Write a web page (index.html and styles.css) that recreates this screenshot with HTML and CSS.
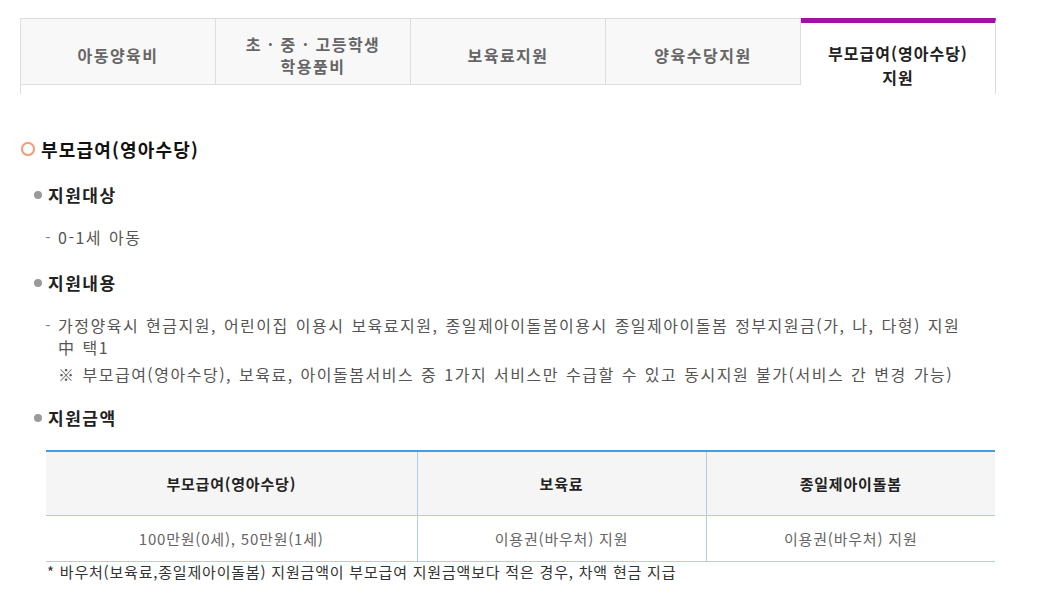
FILE: index.html
```html
<!DOCTYPE html>
<html lang="ko">
<head>
  <meta charset="UTF-8">
  <title>부모급여(영아수당) 지원</title>
  <link rel="stylesheet" href="styles.css">
</head>
<body>

  <div class="wrap">
    <ul class="tabs">
      <li class="tab">아동양육비</li>
      <li class="tab">초 · 중 · 고등학생<br>학용품비</li>
      <li class="tab">보육료지원</li>
      <li class="tab">양육수당지원</li>
      <li class="tab active">부모급여(영아수당)<br>지원</li>
    </ul>

    <div class="content">
      <h2 class="title">부모급여(영아수당)</h2>

      <h3 class="sub">지원대상</h3>
      <ul class="dash-list">
        <li>0-1세 아동</li>
      </ul>

      <h3 class="sub">지원내용</h3>
      <ul class="dash-list">
        <li>
          가정양육시 현금지원, 어린이집 이용시 보육료지원, 종일제아이돌봄이용시 종일제아이돌봄 정부지원금(가, 나, 다형) 지원<br>中 택1
          <p class="note">※ 부모급여(영아수당), 보육료, 아이돌봄서비스 중 1가지 서비스만 수급할 수 있고 동시지원 불가(서비스 간 변경 가능)</p>
        </li>
      </ul>

      <h3 class="sub">지원금액</h3>
      <table class="amount">
        <thead>
          <tr>
            <th class="col1">부모급여(영아수당)</th>
            <th class="col2">보육료</th>
            <th>종일제아이돌봄</th>
          </tr>
        </thead>
        <tbody>
          <tr>
            <td>100만원(0세), 50만원(1세)</td>
            <td>이용권(바우처) 지원</td>
            <td>이용권(바우처) 지원</td>
          </tr>
        </tbody>
      </table>
      <p class="foot">* 바우처(보육료,종일제아이돌봄) 지원금액이 부모급여 지원금액보다 적은 경우, 차액 현금 지급</p>
    </div>
  </div>

</body>
</html>
```

FILE: styles.css
```css
* {
  margin: 0;
  padding: 0;
  box-sizing: border-box;
}

body {
  font-family: "Noto Sans CJK KR", "Noto Sans", sans-serif;
  color: #333;
  background: #fff;
}

.wrap {
  padding: 18px 0 0 20px;
  width: 1000px;
}

/* tabs */
.tabs {
  list-style: none;
  display: flex;
  align-items: flex-start;
  width: 976px;
  border-left: 1px solid #ddd;
}

.tab {
  width: 195px;
  height: 67px;
  padding-top: 6px;
  display: flex;
  align-items: center;
  justify-content: center;
  text-align: center;
  font-size: 16px;
  font-weight: bold;
  line-height: 22px;
  letter-spacing: 1.5px;
  color: #666;
  background: #f8f8f8;
  border-top: 1px solid #ddd;
  border-right: 1px solid #ddd;
  border-bottom: 1px solid #ddd;
}

.tab.active {
  height: 76px;
  padding-top: 12px;
  line-height: 24px;
  letter-spacing: 1px;
  color: #222;
  background: #fff;
  border-top: 5px solid #a1139f;
  border-bottom: none;
}

/* content */
.content {
  padding-top: 43px;
}

.title {
  display: flex;
  align-items: center;
  font-size: 18px;
  line-height: 24px;
  letter-spacing: 1.2px;
  color: #111;
}

.title::before {
  content: "";
  width: 10px;
  height: 10px;
  margin: 0 6px 0 1px;
  border-radius: 50%;
  border: 2px solid #f2a07c;
  background: #fff;
  box-shadow: 0 0 1px #f7c4ac;
}

.sub {
  display: flex;
  align-items: center;
  margin: 22px 0 0 14px;
  font-size: 17px;
  line-height: 24px;
  letter-spacing: 1.5px;
  color: #222;
}

.sub::before {
  content: "";
  width: 8px;
  height: 8px;
  margin-right: 6px;
  border-radius: 50%;
  background: #9a9a9a;
}

.dash-list {
  list-style: none;
  margin: 19px 0 0 25px;
}

.dash-list + .sub {
  margin-top: 23px;
}

.dash-list li {
  position: relative;
  padding-left: 13px;
  font-size: 16px;
  line-height: 22px;
  color: #555;
  letter-spacing: 1.5px;
  word-spacing: 1px;
}

.dash-list li::before {
  content: "-";
  position: absolute;
  left: 0;
  top: 0;
  color: #888;
}

.note {
  margin: 5px 0 -2px;
}

/* amount table */
.amount {
  margin: 20px 0 0 26px;
  width: 949px;
  border-collapse: collapse;
  border-top: 2px solid #4a9ed8;
  font-size: 15px;
  letter-spacing: 0.8px;
}

.amount th,
.amount td {
  border: 1px solid #a9d1ef;
  border-top: none;
  text-align: center;
}

.amount th:first-child,
.amount td:first-child {
  border-left: none;
}

.amount th:last-child,
.amount td:last-child {
  border-right: none;
}

.amount th {
  height: 64px;
  background: #f5f5f5;
  color: #222;
  font-weight: bold;
}

.amount td {
  height: 46px;
  color: #666;
}

.amount .col1 {
  width: 371px;
}

.amount .col2 {
  width: 289px;
}

.foot {
  margin: -1px 0 0 27px;
  font-size: 15px;
  line-height: 21px;
  letter-spacing: 0.8px;
  color: #333;
}
```
